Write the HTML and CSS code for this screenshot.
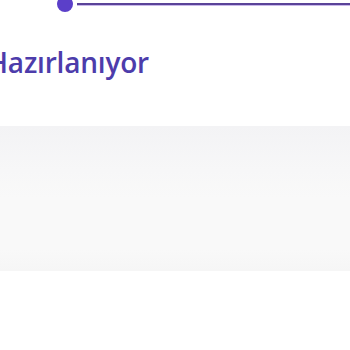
FILE: index.html
```html
<!DOCTYPE html>
<html lang="tr">
<head>
<meta charset="utf-8">
<link rel="stylesheet" href="styles.css">
</head>
<body>
<div class="page">
  <div class="progress">
    <span class="dot"></span>
    <span class="line"></span>
  </div>
  <h1 class="status">Hazırlanıyor</h1>
  <div class="panel"></div>
</div>
</body>
</html>
```
FILE: styles.css
```css
html, body {
  margin: 0;
  padding: 0;
  background: #ffffff;
  overflow: hidden;
}
.page {
  width: 350px;
  height: 350px;
  display: flex;
  flex-direction: column;
  font-family: "Open Sans", "Noto Sans", sans-serif;
}
.progress {
  display: flex;
  align-items: center;
  height: 8px;
  padding-left: 57px;
  gap: 4px;
}
.dot {
  width: 16px;
  height: 16px;
  border-radius: 50%;
  background: #5b3fc9;
  flex: none;
}
.line {
  flex: 1;
  height: 2px;
  background: #5a4399;
  box-shadow: 0 1px 0 #c9b8ea;
}
.status {
  margin: 35px 0 0 -13px;
  font-size: 28px;
  font-weight: 600;
  line-height: 38px;
  color: #4d3cab;
  letter-spacing: -0.2px;
}
.panel {
  margin-top: 45px;
  height: 145px;
  background: linear-gradient(to bottom, #f3f3f5 0%, #f7f7f8 30%, #f9f9f9 50%, #f9f9f9 85%, #f6f6f6 100%);
}
```
